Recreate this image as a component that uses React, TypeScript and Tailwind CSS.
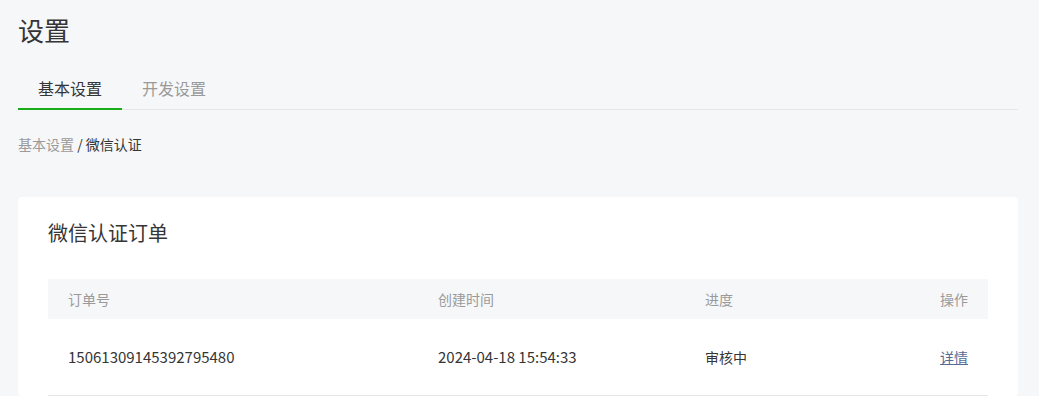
const CJK = "font-['Noto_Sans_CJK_SC','Noto_Sans',sans-serif]"

const TABS = [
  { label: '基本设置', active: true },
  { label: '开发设置', active: false },
]

const ORDERS = [
  { id: '15061309145392795480', created: '2024-04-18 15:54:33', status: '审核中' },
]

export default function App() {
  return (
    <div className={`min-h-[396px] bg-[#f6f7f9] pt-[12px] pr-[21px] pl-[18px] text-[#353535] ${CJK}`}>
      <h1 className="text-[26px] leading-[36px] font-normal">设置</h1>

      <div className="mt-[28px] flex border-b border-[#e5e6e8]">
        {TABS.map((t) => (
          <div
            key={t.label}
            className={`-mb-px w-[104px] border-b-2 pb-[8px] text-center text-[16px] leading-[24px] ${
              t.active ? 'border-[#1aad19] text-[#353535]' : 'border-transparent text-[#9a9a9a]'
            }`}
          >
            {t.label}
          </div>
        ))}
      </div>

      <div className="mt-[24px] text-[14px] leading-[20px]">
        <span className="text-[#9a9a9a]">基本设置</span>
        <span> / 微信认证</span>
      </div>

      <div className="mt-[43px] rounded-[4px] bg-white px-[30px] pt-[22px]">
        <h2 className="text-[20px] leading-[28px] font-normal">微信认证订单</h2>

        <div className="mt-[32px]">
          <div className="grid h-[40px] grid-cols-[370px_267px_1fr_100px] items-center bg-[#f6f7f9] px-[20px] text-[14px] text-[#9a9a9a]">
            <span>订单号</span>
            <span>创建时间</span>
            <span>进度</span>
            <span className="text-right">操作</span>
          </div>
          {ORDERS.map((o) => (
            <div
              key={o.id}
              className="grid h-[77px] grid-cols-[370px_267px_1fr_100px] items-center border-b border-[#e5e6e8] px-[20px] text-[14px]"
            >
              <span className="text-[15px]">{o.id}</span>
              <span className="text-[15px]">{o.created}</span>
              <span>{o.status}</span>
              <span className="text-right">
                <a href="#" className="text-[#576b95] underline">详情</a>
              </span>
            </div>
          ))}
        </div>
      </div>
    </div>
  )
}
